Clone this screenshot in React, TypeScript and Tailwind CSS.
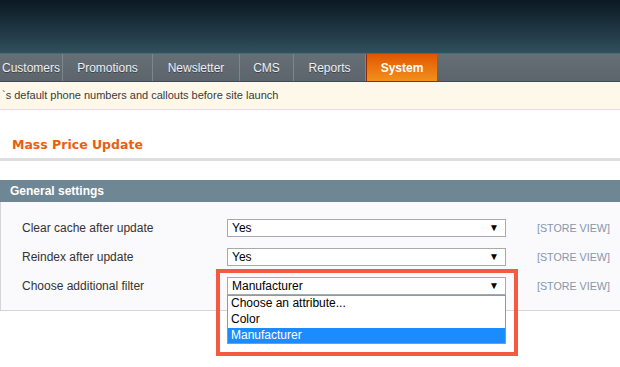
const navItems = [
  { label: "Customers", w: "w-[63px]", active: false },
  { label: "Promotions", w: "w-[90px]", active: false },
  { label: "Newsletter", w: "w-[87px]", active: false },
  { label: "CMS", w: "w-[54px]", active: false },
  { label: "Reports", w: "w-[72px]", active: false },
  { label: "System", w: "w-[71px]", active: true },
];

function Select({ value }: { value: string }) {
  return (
    <div className="flex h-[18px] w-[279px] items-center justify-between border border-[#a9a9a9] bg-white pl-[4px] pr-[6px] text-[12px] leading-none text-black">
      <span>{value}</span>
      <span className="text-[10px]">▼</span>
    </div>
  );
}

function Row({ label, value, open }: { label: string; value: string; open?: boolean }) {
  return (
    <div className="flex h-[18px] items-center">
      <div className="w-[226px] pl-[21px] text-[12px] text-[#333]">{label}</div>
      <div className="relative">
        <Select value={value} />
        {open && (
          <>
            <div className="absolute left-0 top-[18px] z-10 w-[279px] border border-[#7f9db9] bg-white text-[12px] leading-[15px] text-black">
              <div className="h-[16px] pl-[3px]">Choose an attribute...</div>
              <div className="h-[16px] pl-[3px]">Color</div>
              <div className="h-[15px] bg-[#1a8cff] pl-[3px] text-white">Manufacturer</div>
            </div>
            <div className="pointer-events-none absolute left-[-11px] top-[-8px] z-20 h-[87px] w-[302px] border-4 border-[#f55a3f]" />
          </>
        )}
      </div>
      <div className="ml-[31px] text-[10.7px] text-[#8797ab]">[STORE VIEW]</div>
    </div>
  );
}

export default function App() {
  return (
    <div className="h-[367px] w-[620px] overflow-hidden bg-white font-['Liberation_Sans',Arial,sans-serif]">
      <div className="h-[53px] bg-gradient-to-b from-[#0b1922] to-[#30505d]" />
      <div className="h-px bg-[#4f6873]" />
      <nav className="flex h-[28px] border-b border-[#3f4a52] bg-gradient-to-b from-[#666e76] to-[#5c646c]">
        {navItems.map((item) =>
          item.active ? (
            <div
              key={item.label}
              className={`${item.w} flex items-center justify-center border-l border-[#8a2a10] bg-gradient-to-b from-[#e05500] to-[#f2901c] text-[12px] font-bold text-white`}
            >
              {item.label}
            </div>
          ) : (
            <div
              key={item.label}
              className={`${item.w} flex items-center justify-center border-r border-[#7e868d] text-[12px] text-[#eef0f4] [text-shadow:0_1px_0_#3a4248]`}
            >
              {item.label}
            </div>
          )
        )}
      </nav>
      <div className="flex h-[28px] items-center border-b border-[#f1dfb6] bg-[#fef8ea] pl-[2px] text-[11px] text-[#3a3a3a]">
        `s default phone numbers and callouts before site launch
      </div>

      <div className="pt-[26px]">
        <h1 className="pl-[12px] font-['DejaVu_Sans',sans-serif] text-[12.5px] font-bold leading-[18px] text-[#eb5e0b]">
          Mass Price Update
        </h1>
        <div className="mt-[4px] h-[3px] bg-[#dedde0]" />
      </div>

      <div className="mt-[19px]">
        <div className="flex h-[22px] items-center bg-[#6f8695] pl-[10px] text-[12px] font-bold text-white">
          General settings
        </div>
        <div className="flex flex-col gap-[11px] border-b border-l border-[#d5d5d8] bg-[#faf9fc] pb-[15px] pt-[17px]">
          <Row label="Clear cache after update" value="Yes" />
          <Row label="Reindex after update" value="Yes" />
          <Row label="Choose additional filter" value="Manufacturer" open />
        </div>
      </div>
    </div>
  );
}
